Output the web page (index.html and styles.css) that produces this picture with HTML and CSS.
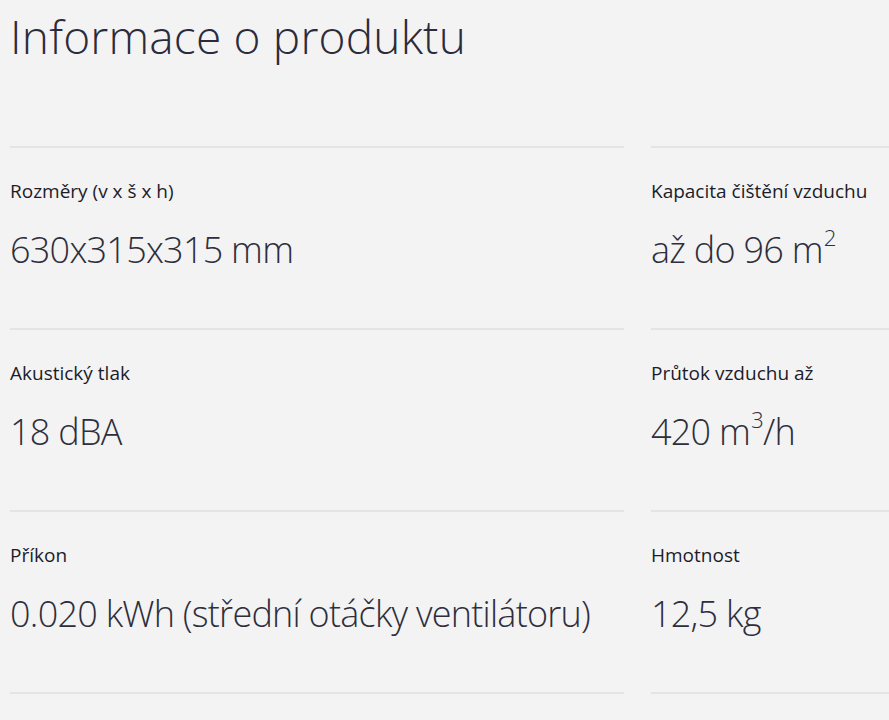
FILE: index.html
```html
<!DOCTYPE html>
<html lang="cs">
<head>
<meta charset="utf-8">
<title>Informace o produktu</title>
<link rel="stylesheet" href="styles.css">
</head>
<body>
<main class="page">
  <h1 class="title">Informace o produktu</h1>
  <div class="specs">
    <div class="spec">
      <div class="label">Rozměry (v x š x h)</div>
      <div class="value">630x315x315 mm</div>
    </div>
    <div class="spec">
      <div class="label">Kapacita čištění vzduchu</div>
      <div class="value">až do 96 m<sup>2</sup></div>
    </div>
    <div class="spec">
      <div class="label">Akustický tlak</div>
      <div class="value">18 dBA</div>
    </div>
    <div class="spec">
      <div class="label">Průtok vzduchu až</div>
      <div class="value">420 m<sup>3</sup>/h</div>
    </div>
    <div class="spec">
      <div class="label">Příkon</div>
      <div class="value">0.020 kWh (střední otáčky ventilátoru)</div>
    </div>
    <div class="spec">
      <div class="label">Hmotnost</div>
      <div class="value">12,5 kg</div>
    </div>
  </div>
</main>
</body>
</html>
```

FILE: styles.css
```css
html, body {
  margin: 0;
  padding: 0;
  background: #f3f3f3;
  overflow: hidden;
}
.page {
  padding-left: 10px;
  width: 1300px;
  font-family: "Open Sans", "Noto Sans", sans-serif;
  color: #2b2b3b;
}
.title {
  margin: 0;
  padding-top: 4px;
  height: 142px;
  font-size: 46px;
  font-weight: 300;
  line-height: 64px;
  letter-spacing: 0.2px;
}
.specs {
  display: grid;
  grid-template-columns: 614px 614px;
  column-gap: 27px;
}
.spec {
  border-top: 2px solid #e4e4e4;
  height: 180px;
  box-sizing: content-box;
}
.spec:nth-last-child(-n+2) {
  border-bottom: 2px solid #e4e4e4;
}
.label {
  padding-top: 30px;
  font-size: 19px;
  line-height: 26px;
  color: #1c1c2a;
}
.value {
  margin-top: 22px;
  font-size: 36px;
  font-weight: 300;
  line-height: 48px;
  letter-spacing: -0.75px;
  color: #2e2e3c;
}
.value sup {
  font-size: 0.62em;
  line-height: 0;
  vertical-align: 0.75em;
  margin-left: 1px;
}
```
